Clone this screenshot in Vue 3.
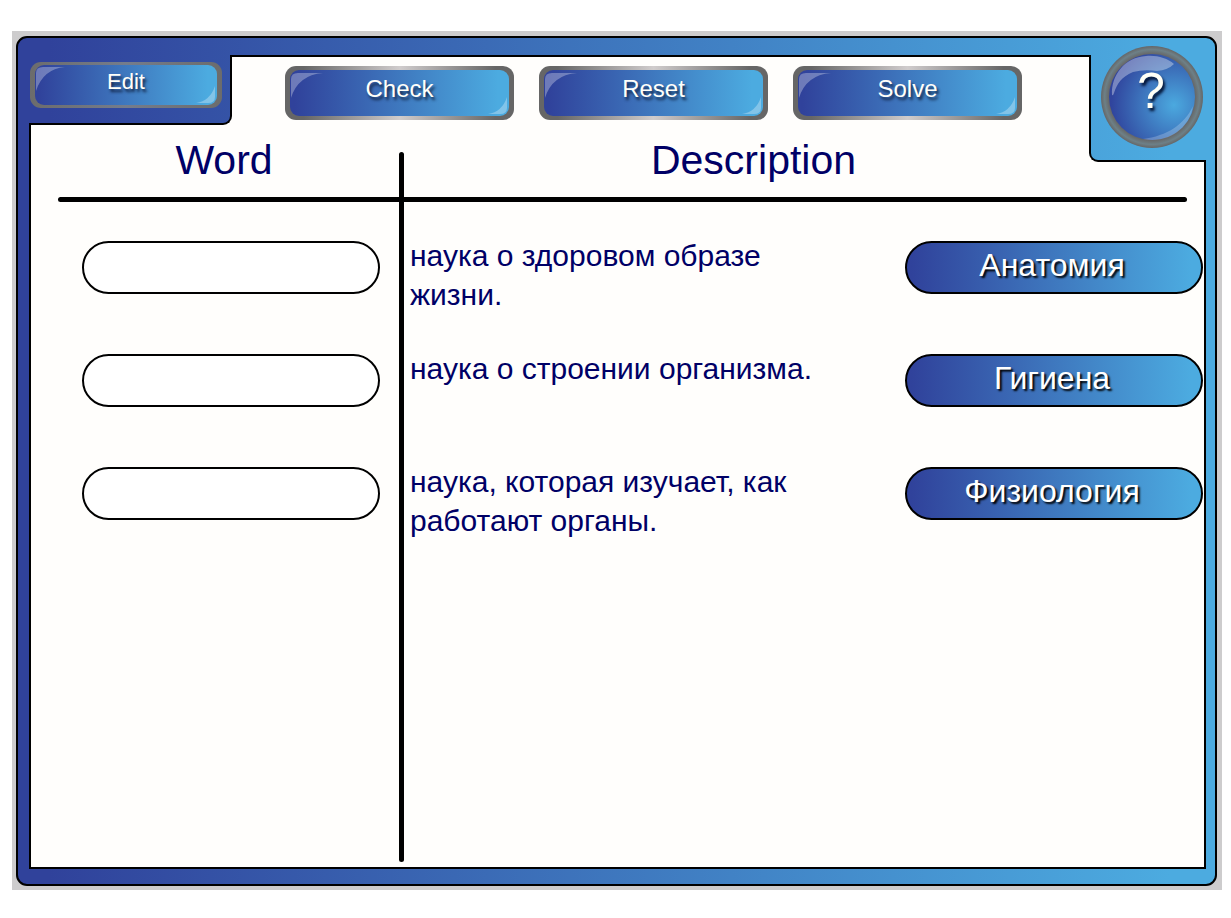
<script setup>
import { ref } from 'vue'

const rows = ref([
  { description: 'наука о здоровом образе жизни.', answer: 'Гигиена', value: '', option: 'Анатомия' },
  { description: 'наука о строении организма.', answer: 'Анатомия', value: '', option: 'Гигиена' },
  { description: 'наука, которая изучает, как работают органы.', answer: 'Физиология', value: '', option: 'Физиология' },
])

const place = (word) => {
  const slot = rows.value.find((row) => !row.value)
  if (slot) slot.value = word
}
const check = () => rows.value.forEach((row) => { if (row.value !== row.answer) row.value = '' })
const reset = () => rows.value.forEach((row) => { row.value = '' })
const solve = () => rows.value.forEach((row) => { row.value = row.answer })

const actions = [
  { label: 'Check', run: check },
  { label: 'Reset', run: reset },
  { label: 'Solve', run: solve },
]
</script>

<template>
  <main class="stage">
    <div class="frame">
      <section class="panel">
        <header class="header">
          <div class="tab tab-left">
            <button type="button" class="glossy glossy-small">
              <span class="face">
                <svg class="shine shine-top" viewBox="0 0 30 26" aria-hidden="true"><path d="M1 25V7Q1 1 8 1H30Q8 3 1 25Z" /></svg>
                <span class="label">Edit</span>
                <svg class="shine shine-bottom" viewBox="0 0 20 18" aria-hidden="true"><path d="M19 0V11Q19 17 12 17H0Q14 15 19 0Z" /></svg>
              </span>
            </button>
          </div>
          <nav class="actions" aria-label="Exercise">
            <button v-for="action in actions" :key="action.label" type="button" class="glossy" @click="action.run">
              <span class="face">
                <svg class="shine shine-top" viewBox="0 0 34 28" aria-hidden="true"><path d="M1 27V8Q1 2 8 2H33Q8 4 1 27Z" /></svg>
                <span class="label">{{ action.label }}</span>
                <svg class="shine shine-bottom" viewBox="0 0 20 18" aria-hidden="true"><path d="M19 0V11Q19 17 12 17H0Q14 15 19 0Z" /></svg>
              </span>
            </button>
          </nav>
          <div class="tab tab-right">
            <button type="button" class="help" aria-label="Help">
              <svg class="ball" viewBox="0 0 102 102" aria-hidden="true">
                <defs>
                  <radialGradient id="ball-fill" gradientUnits="userSpaceOnUse" cx="73" cy="59" r="63">
                    <stop offset="0" stop-color="#4ba9df" />
                    <stop offset="1" stop-color="#30449d" />
                  </radialGradient>
                  <radialGradient id="ball-rim">
                    <stop offset="0.84" stop-color="#666" />
                    <stop offset="0.93" stop-color="#6d8087" />
                    <stop offset="1" stop-color="#666" />
                  </radialGradient>
                </defs>
                <circle cx="51" cy="51" r="51" fill="url(#ball-rim)" />
                <circle cx="51" cy="51" r="43" fill="url(#ball-fill)" />
                <path d="M11 49C10 29 24 11 45 10C56 9 66 12 73 18Q67 24 56 25Q43 23 32 26C20 31 16 38 13 47Q12 50 11 49Z" fill="#fff" fill-opacity=".35" />
                <path d="M42 93C66 90 84 78 92 60C89 81 69 98 42 93Z" fill="#fff" fill-opacity=".22" />
              </svg>
              <span class="mark">?</span>
            </button>
          </div>
        </header>

        <div class="board">
          <table class="matches">
            <colgroup>
              <col class="col-word">
              <col>
              <col class="col-option">
            </colgroup>
            <thead>
              <tr>
                <th scope="col">Word</th>
                <th scope="col" colspan="2" class="description-head">Description</th>
              </tr>
            </thead>
            <tbody>
              <tr v-for="(row, index) in rows" :key="row.option">
                <td class="word">
                  <input v-model="row.value" class="slot" type="text" :aria-labelledby="'description-' + index">
                </td>
                <td :id="'description-' + index" class="description">{{ row.description }}</td>
                <td class="option">
                  <button type="button" class="pill" @click="place(row.option)">{{ row.option }}</button>
                </td>
              </tr>
            </tbody>
          </table>
          <div class="rule rule-across"></div>
          <div class="rule rule-down"></div>
        </div>
      </section>
    </div>
  </main>
</template>

<style>
body {
  margin: 0;
  background: #fff;
}
</style>

<style scoped>
.stage,
.stage * {
  box-sizing: border-box;
}

.stage {
  display: flex;
  min-height: calc(100vh - 59px);
  margin: 31px 9px 28px 12px;
  padding: 5px 5px 4px 4px;
  background: #cdcccd;
  font-family: "Liberation Sans", Arial, sans-serif;
}

button,
input {
  font-family: inherit;
}

button {
  margin: 0;
  padding: 0;
  border: 0;
  cursor: pointer;
}

.frame,
.tab {
  background: linear-gradient(90deg, #30429b 4%, #4cabe0 95%) fixed;
}

.frame {
  display: flex;
  flex: 1;
  padding: 17px 9px 15px 11px;
  border: 2px solid #000;
  border-radius: 11px;
}

.panel {
  display: flex;
  flex: 1;
  flex-direction: column;
  border: 2px solid #000;
  background: #fffefc;
}

.header {
  display: flex;
  align-items: flex-start;
  justify-content: space-between;
  height: 68px;
}

.tab {
  position: relative;
  margin-top: -2px;
  border: 0 solid #000;
}

.tab-left {
  width: 203px;
  height: 70px;
  margin-left: -2px;
  padding: 7px 0 0 1px;
  border-width: 0 2px 2px 0;
  border-bottom-right-radius: 9px;
}

.tab-right {
  width: 117px;
  height: 107px;
  margin-right: -2px;
  border-width: 0 0 2px 2px;
  border-bottom-left-radius: 9px;
}

.actions {
  display: flex;
  gap: 25px;
  padding: 9px 14px 0 0;
}

.glossy {
  display: flex;
  width: 229px;
  height: 54px;
  padding: 4px 5px;
  border-radius: 11px;
  background: linear-gradient(90deg, #666 8%, #d0cccc 50%, #666 92%);
  color: #fffffa;
  font-size: 24px;
}

.glossy-small {
  width: 192px;
  height: 46px;
  padding: 3px 5px;
  background: linear-gradient(90deg, #6c6c6c, #747c8c 50%, #6c6c6c);
  font-size: 22px;
}

.face {
  display: flex;
  position: relative;
  flex: 1;
  align-items: center;
  justify-content: center;
  align-self: stretch;
  padding-bottom: 8px;
  border-radius: 9px;
  background: linear-gradient(90deg, #30429b 2%, #4cabe0 95%);
}

.glossy-small .face {
  padding-bottom: 6px;
}

.label {
  text-shadow: 2px 3px 3px #112344;
}

.shine {
  position: absolute;
  fill: #fff;
  fill-opacity: 0.3;
}

.shine-top {
  top: 1px;
  left: 0;
  width: 34px;
  height: 28px;
}

.glossy-small .shine-top {
  width: 30px;
  height: 26px;
}

.shine-bottom {
  right: 1px;
  bottom: 1px;
  width: 20px;
  height: 18px;
}

.help {
  display: grid;
  width: 102px;
  height: 102px;
  margin: -9px 0 0 10px;
  border-radius: 50%;
  background: none;
}

.ball,
.mark {
  grid-area: 1 / 1;
}

.ball {
  width: 102px;
  height: 102px;
}

.mark {
  padding: 17px 2px 0 0;
  color: #fffff6;
  font-size: 50px;
  line-height: 56px;
  text-shadow: 2px 3px 3px #001030;
}

.board {
  display: grid;
  flex: 1;
}

.matches,
.rule {
  grid-area: 1 / 1;
}

.matches {
  align-self: start;
  width: 100%;
  border-collapse: collapse;
  table-layout: fixed;
  color: #000066;
}

.col-word {
  width: 370px;
}

.col-option {
  width: 330px;
}

th {
  height: 116px;
  padding: 12px 0 0 16px;
  font-size: 41px;
  font-weight: 400;
  line-height: 46px;
  text-align: center;
  vertical-align: top;
}

.description-head {
  padding-right: 114px;
}

td {
  height: 113px;
  padding: 0;
  vertical-align: top;
}

.word {
  padding: 0 21px 0 51px;
}

.slot {
  display: block;
  width: 100%;
  height: 53px;
  padding: 0 24px;
  border: 2px solid #000;
  border-radius: 27px;
  background: #fff;
  color: #000066;
  font-size: 30px;
  text-align: center;
}

.description {
  padding: 0 40px 0 9px;
  font-size: 30px;
  line-height: 39px;
}

/* Text rides slightly above the top edge of the slot beside it. */
.description::before {
  display: block;
  margin-top: -5px;
  content: "";
}

.option {
  padding: 0 1px 0 31px;
}

.pill {
  display: block;
  width: 100%;
  height: 53px;
  padding: 0 4px 4px 0;
  border: 2px solid #000;
  border-radius: 27px;
  background: linear-gradient(90deg, #30429b 2%, #4cabe0 96%) border-box;
  color: #fff;
  font-size: 32px;
  text-shadow: 2px 2px 2px #000;
}

.rule {
  border-radius: 3px;
  background: #000;
}

.rule-across {
  height: 5px;
  margin: 72px 17px 0 27px;
}

.rule-down {
  width: 5px;
  margin: 27px 0 5px 368px;
}
</style>
